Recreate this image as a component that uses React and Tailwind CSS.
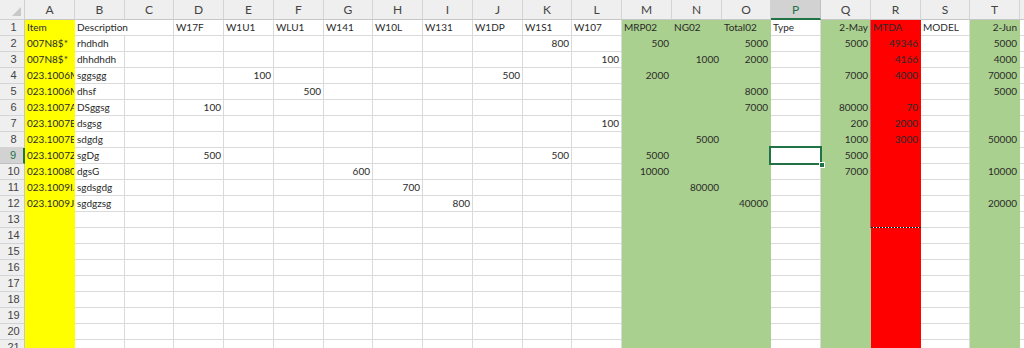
import React from "react";

/* ===== COLUMNS ===== */
const cols = [
    { key: "A", w: "w-[50px]", fill: "yellow" },
    { key: "B", w: "w-[50px]" },
    { key: "C", w: "w-[49px]" },
    { key: "D", w: "w-[50px]" },
    { key: "E", w: "w-[50px]" },
    { key: "F", w: "w-[50px]" },
    { key: "G", w: "w-[49px]" },
    { key: "H", w: "w-[50px]" },
    { key: "I", w: "w-[50px]" },
    { key: "J", w: "w-[50px]" },
    { key: "K", w: "w-[49px]" },
    { key: "L", w: "w-[50px]" },
    { key: "M", w: "w-[50px]", fill: "green" },
    { key: "N", w: "w-[50px]", fill: "green" },
    { key: "O", w: "w-[49px]", fill: "green" },
    { key: "P", w: "w-[50px]" },
    { key: "Q", w: "w-[50px]", fill: "green" },
    { key: "R", w: "w-[50px]", fill: "red" },
    { key: "S", w: "w-[49px]" },
    { key: "T", w: "w-[50px]", fill: "green" },
    { key: "U", w: "w-[60px]" },
];

const fillClass = {
    yellow: "bg-[#ffff00] border-[#ffff00]",
    green: "bg-[#a9d08e] border-[#a9d08e]",
    red: "bg-[#ff0000] border-[#ff0000]",
};

/* ===== DATA ===== */
const rows = [
    { A: "Item", B: "Description", D: "W17F", E: "W1U1", F: "WLU1", G: "W141", H: "W10L", I: "W131", J: "W1DP", K: "W1S1", L: "W107", M: "MRP02", N: "NG02", O: "Total02", P: "Type", Q: "2-May", R: "MTDA", S: "MODEL", T: "2-Jun" },
    { A: "007N8$*", B: "rhdhdh", K: 800, M: 500, O: 5000, Q: 5000, R: 49346, T: 5000 },
    { A: "007N8$*", B: "dhhdhdh", L: 100, N: 1000, O: 2000, R: 4166, T: 4000 },
    { A: "023.1006MH12", B: "sggsgg", E: 100, J: 500, M: 2000, Q: 7000, R: 4000, T: 70000 },
    { A: "023.1006MH12", B: "dhsf", F: 500, O: 8000, T: 5000 },
    { A: "023.1007A112", B: "DSggsg", D: 100, O: 7000, Q: 80000, R: 70 },
    { A: "023.1007EE12", B: "dsgsg", L: 100, Q: 200, R: 2000 },
    { A: "023.1007EE12", B: "sdgdg", N: 5000, Q: 1000, R: 3000, T: 50000 },
    { A: "023.1007Z112", B: "sgDg", D: 500, K: 500, M: 5000, Q: 5000 },
    { A: "023.10080.12", B: "dgsG", G: 600, M: 10000, Q: 7000, T: 10000 },
    { A: "023.1009I.`12", B: "sgdsgdg", H: 700, N: 80000 },
    { A: "023.1009J.12", B: "sgdgzsg", I: 800, O: 40000, T: 20000 },
];

const rightAligned = ["Q", "T"];

function Cell({ col, value, rowIdx }) {
    const isNum = typeof value === "number";
    const right = isNum || (rowIdx === 0 && rightAligned.includes(col.key));
    const overflow = rowIdx === 0 && col.key === "B";
    const fill = col.fill ? fillClass[col.fill] : "border-[#dadada]";
    return (
        <div
            className={`${col.w} shrink-0 h-[16px] border-b ${overflow ? "border-r-0" : "border-r"} ${fill} ${
                overflow ? "overflow-visible" : "overflow-hidden"
            } whitespace-nowrap text-[10px] leading-[15px] text-[#2a2a2a] ${right ? "text-right pr-[2px]" : "text-left pl-[2px]"}`}
        >
            {value !== undefined ? value : ""}
        </div>
    );
}

export default function App() {
    const allRows = Array.from({ length: 21 }, (_, i) => rows[i] || {});

    return (
        <div
            className="relative w-[1024px] h-[348px] overflow-hidden bg-white"
            style={{ fontFamily: "Lato, 'Liberation Sans', sans-serif" }}
        >
            {/* COLUMN HEADERS */}
            <div className="flex h-[20px]">
                <div className="w-[25px] shrink-0 h-[20px] bg-[#efefef] border-r border-b border-[#d0d0d0] relative">
                    <div className="absolute right-[3px] bottom-[3px] w-0 h-0 border-l-[9px] border-l-transparent border-b-[9px] border-b-[#c8c8c8]" />
                </div>
                {cols.map((c) =>
                    c.key === "P" ? (
                        <div
                            key={c.key}
                            className={`${c.w} shrink-0 h-[20px] bg-[#d2d2d2] border-r border-[#c0c0c0] border-b-2 border-b-[#217346] text-center text-[12px] leading-[19px] text-[#217346]`}
                        >
                            {c.key}
                        </div>
                    ) : (
                        <div
                            key={c.key}
                            className={`${c.w} shrink-0 h-[20px] bg-[#efefef] border-r border-b border-[#d4d4d4] border-b-[#c6c6c6] text-center text-[12px] leading-[20px] text-[#444]`}
                        >
                            {c.key === "U" ? "" : c.key}
                        </div>
                    )
                )}
            </div>

            {/* ROWS */}
            {allRows.map((r, i) => (
                <div key={i} className="flex h-[16px]">
                    <div
                        className={`w-[25px] shrink-0 h-[16px] border-b text-center pl-[3px] text-[11px] leading-[15px] ${
                            i === 8
                                ? "bg-[#d2d2d2] border-b-[#c0c0c0] border-r-2 border-r-[#217346] text-[#217346]"
                                : "bg-[#efefef] border-[#d4d4d4] border-r border-r-[#c6c6c6] text-[#444]"
                        }`}
                        style={{ fontFamily: "'Liberation Sans', sans-serif" }}
                    >
                        {i + 1}
                    </div>
                    {cols.map((c) => (
                        <Cell key={c.key} col={c} value={r[c.key]} rowIdx={i} />
                    ))}
                </div>
            ))}

            {/* MARQUEE ON R */}
            <div className="absolute left-[870px] top-[20px] w-px h-[208px] bg-[#b06060]" />
            <div className="absolute left-[871px] top-[227px] w-[50px] h-px bg-[repeating-linear-gradient(90deg,#222_0px,#222_2px,#fff_2px,#fff_3px)]" />

            {/* ACTIVE CELL P9 */}
            <div className="absolute left-[769px] top-[146px] w-[53px] h-[19px] border-2 border-[#217346]" />
            <div className="absolute left-[819px] top-[162px] w-[6px] h-[6px] bg-[#217346] border border-white" />
        </div>
    );
}
